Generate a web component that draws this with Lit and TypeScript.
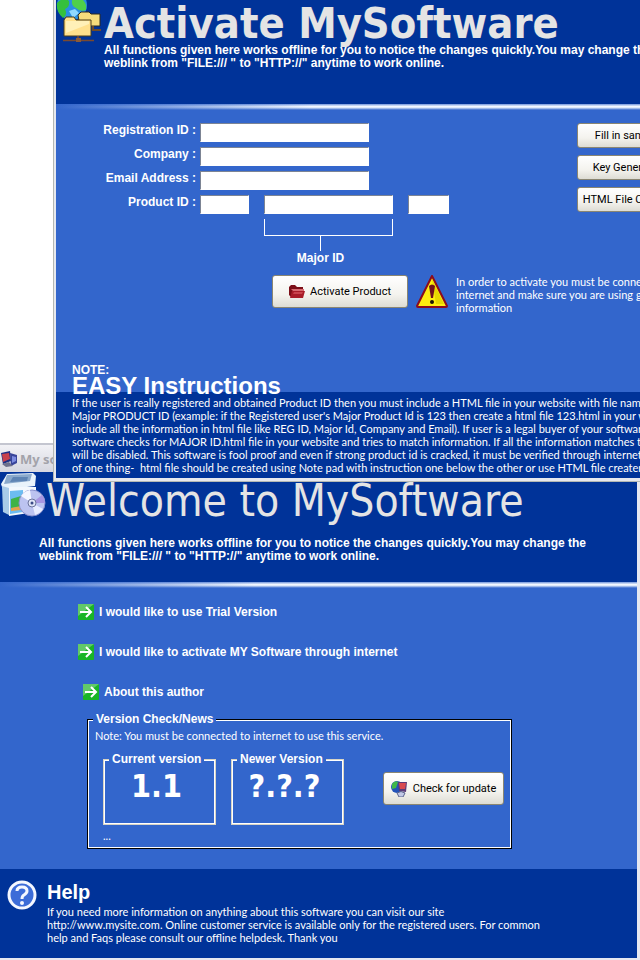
import { LitElement, html, css, svg } from "lit";
import { customElement, property } from "lit/decorators.js";

const networkIcon = svg`
  <svg class="icon" viewBox="0 0 45 44" width="45" height="44" aria-hidden="true">
    <circle cx="16" cy="5" r="15" fill="#2a8fe0"/>
    <path d="M1 3 Q8 -4 13 1 Q14 7 9 9 Q12 15 7 18 Q0 12 1 3Z" fill="#35c03c"/>
    <path d="M16 0 H27 Q31 4 30 10 Q24 12 20 8 Q15 6 16 0Z" fill="#4fd04a"/>
    <path d="M13 11 L19 9 L23 13 L17 18Z" fill="#8fd8ff"/>
    <path d="M22 15 L25 12 H33 L35 14 H44 V26 H24Z" fill="#f6dc7c" stroke="#2c2a20"/>
    <path d="M8 20 L10 17 H18 L20 20 H35 V36 H8Z" fill="#ffe08c" stroke="#4a3c18"/>
    <path d="M10 21 H33 V24 L10 33Z" fill="#fff0b8"/>
    <path d="M37 26 V30 M36 30 H45" stroke="#6d4b2a" stroke-width="2"/>
    <path d="M22 36 V41 M7 40.500 H38" stroke="#7a4a30" stroke-width="1.500"/>
    <rect x="20" y="38" width="5" height="4" fill="#8a5a38"/>
  </svg>`;

const setupIcon = svg`
  <svg class="icon" viewBox="0 0 45 46" width="45" height="46" aria-hidden="true">
    <path d="M0 12 L6 2 L32 1 L35 4 L34 14 L2 18Z" fill="#e9f3fb"/>
    <path d="M6 3 L31 2 L29 9 L3 12Z" fill="#8aa9cc"/>
    <path d="M12 5 H27 L26 9 L9 10Z" fill="#5e84b4"/>
    <path d="M1 14 L8 16 V43 L2 40Z" fill="#a9cbe8"/>
    <path d="M8 15 H35 V40 L8 44Z" fill="#f3f8fd"/>
    <path d="M9 19 L22 18 V40 L9 42Z" fill="#6cbcf0"/>
    <path d="M10 27 L20 24 V35 L10 36Z" fill="#3fb346"/>
    <path d="M10 36 L20 34 V38 L10 39Z" fill="#e5a24a"/>
    <circle cx="31" cy="31" r="13" fill="#bcc3f0" stroke="#8990cc"/>
    <path d="M31 31 L20 24 A13 13 0 0 1 29 18Z" fill="#f4f6ff"/>
    <path d="M31 31 L42 37 A13 13 0 0 1 34 43Z" fill="#e8ecff"/>
    <path d="M31 31 L41 23 A13 13 0 0 1 44 31Z" fill="#a795e0"/>
    <circle cx="31" cy="31" r="4" fill="#dfe3f6" stroke="#6b739c"/>
    <circle cx="31" cy="31" r="1.500" fill="#3a4a86"/>
  </svg>`;

const computerIcon = svg`
  <svg class="icon" viewBox="0 0 18 18" width="18" height="18" aria-hidden="true">
    <path d="M1 3 L10 1 L11 11 L3 14Z" fill="#1d2f86"/>
    <path d="M2 4 L9 3 L10 9 L3 12Z" fill="#c8404c"/>
    <path d="M10 3 L17 5 V13 L11 16Z" fill="#39459a"/>
    <path d="M12 6 L16 7 V11 L12 13Z" fill="#7d8be0"/>
    <path d="M2 14 L9 12 L13 16 L6 17Z" fill="#6c6f8c"/>
  </svg>`;

const folderIcon = svg`
  <svg class="icon" viewBox="0 0 16 14" width="16" height="14" aria-hidden="true">
    <path d="M0 2 L2 0 H6 L8 2 H14 V12 H2 L0 10Z" fill="#7c0f18"/>
    <path d="M2 4 H15 V6 H4Z" fill="#d86a70"/>
    <path d="M3 6 H16 L14 13 H1Z" fill="#a81c28"/>
    <path d="M5 7 H14 L13 9 H4Z" fill="#c9434d"/>
  </svg>`;

const warningIcon = svg`
  <svg class="icon" viewBox="0 0 32 33" width="32" height="33" role="img" aria-label="Warning">
    <path d="M16 1 L31 31 Q31 32 30 32 H2 Q1 32 1 31Z" fill="#ffee10" stroke="#8c0c1c" stroke-width="2" stroke-linejoin="round"/>
    <path d="M16 4 L28 29 H20Z" fill="#e8d800"/>
    <path d="M13 11 Q16 8 19 11 L17 23 H15Z" fill="#70101c"/>
    <circle cx="16" cy="27" r="2" fill="#1c1408"/>
  </svg>`;

const arrowIcon = svg`
  <svg class="icon" viewBox="0 0 16 16" width="16" height="16" aria-hidden="true">
    <rect width="16" height="16" rx="1" fill="#19b526"/>
    <path d="M0 0 H16 L0 12Z" fill="#62c968"/>
    <path d="M2 8 H13 M8 3 L13 8 L8 13" fill="none" stroke="#fff" stroke-width="2"/>
  </svg>`;

const updateIcon = svg`
  <svg class="icon" viewBox="0 0 16 16" width="16" height="16" aria-hidden="true">
    <circle cx="6" cy="6" r="6" fill="#2353b8"/>
    <path d="M1 3 Q4 -1 7 1 L5 7 L1 8Z" fill="#3fb84a"/>
    <path d="M7 1 H16 L15 11 L8 10Z" fill="#5a3a78"/>
    <path d="M8 2 H15 L14 8 L9 8Z" fill="#d84a50"/>
    <path d="M6 12 Q10 9 14 12 L12 16 H8Z" fill="#c2c9e6" stroke="#5a628c"/>
  </svg>`;

const helpIcon = svg`
  <svg class="icon" viewBox="0 0 30 32" width="30" height="32" aria-hidden="true">
    <circle cx="15" cy="16" r="13" fill="#3c6cd8" stroke="#f4f7ff" stroke-width="3"/>
    <path d="M10 12 Q10 8 15 8 Q20 8 20 12 Q20 14 17 16 Q15 17 15 20" fill="none" stroke="#f4f7ff" stroke-width="3"/>
    <circle cx="15" cy="24" r="2" fill="#f4f7ff"/>
  </svg>`;

const shared = css`
  :host {
    display: block;
    font: 11px/13px Lato, "Liberation Sans", Arial, sans-serif;
    color: #fff;
  }
  * { box-sizing: border-box; }
  h1, h2, h3, p, fieldset, legend { margin: 0; padding: 0; }
  p { white-space: nowrap; }
  .icon { display: block; flex: none; }
  h2, h3, label, .bold { font-family: "Liberation Sans", Arial, sans-serif; font-weight: bold; }
  .bold { font-size: 12px; }
  .display {
    font: 44px/46px "DejaVu Sans Condensed", "Noto Sans", sans-serif;
    color: #e4e4e4;
    white-space: nowrap;
  }
  .dark { background: #003399; }
  .rule {
    height: 6px;
    background:
      linear-gradient(to right, #3366cc, transparent 40%),
      linear-gradient(#6f93dc, #f4f9ff 40%, #dce8fb 60%, #3366cc);
  }
  .push {
    display: flex;
    flex: none;
    align-items: center;
    justify-content: center;
    border: 1px solid #8a8672;
    border-radius: 3px;
    padding: 0;
    background: linear-gradient(#fff, #f4f3ee 60%, #dddcd4);
    font: 11px/14px Roboto, "Liberation Sans", Arial, sans-serif;
    color: #000;
    white-space: nowrap;
  }
`;

@customElement("activate-window")
export class ActivateWindow extends LitElement {
  static styles = [shared, css`
    .frame {
      border: solid #e6e8ee;
      border-width: 0 0 3px 2px;
      outline: 1px solid #b4b8b4;
      background: #3366cc;
    }
    .header { display: flex; gap: 3px; height: 104px; }
    .display { font-size: 43px; font-weight: bold; line-height: 46px; }
    .header p { margin-top: -2px; }
    .body { display: flex; flex-direction: column; height: 282px; padding: 13px 0 0 44px; }
    .top { display: flex; justify-content: space-between; }
    .form { display: grid; grid-template-columns: 96px auto; column-gap: 4px; row-gap: 5px; }
    label { text-align: right; font-size: 12px; line-height: 15px; white-space: nowrap; }
    input {
      display: block;
      height: 19px;
      border: 1px solid #fff;
      border-top-color: #7c8494;
      border-left-color: #7c8494;
      padding: 0 2px;
      background: #fff;
      font: inherit;
      color: #000;
    }
    .wide { width: 169px; }
    .ids { display: flex; gap: 15px; }
    .prefix { width: 49px; }
    .major { width: 129px; }
    .suffix { width: 41px; }
    .bracket {
      grid-column: 2;
      width: 113px;
      margin-left: 64px;
      display: flex;
      flex-direction: column;
      align-items: center;
      line-height: 15px;
    }
    .brace { align-self: flex-start; width: 129px; height: 17px; border: solid #fff; border-width: 0 1px 1px; }
    .stem { width: 1px; height: 15px; background: #fff; }
    .side { display: flex; flex-direction: column; gap: 7px; margin-right: 17px; }
    .side .push { width: 100px; height: 25px; }
    .action { display: flex; gap: 8px; margin: 9px 0 0 172px; }
    .action .push { width: 136px; height: 33px; gap: 5px; }
    .notes { margin: auto 0 -4px -28px; }
    h2 { font-size: 24px; line-height: 20px; white-space: nowrap; }
    h3 { font-size: 12px; line-height: 12px; }
    .footer { padding: 4px 0 4px 16px; height: 86px; }
  `];

  render() {
    return html`
      <section class="frame">
        <header class="header dark">
          ${networkIcon}
          <div>
            <h1 class="display">Activate MySoftware</h1>
            <p class="bold">All functions given here works offline for you to notice the changes quickly.You may change the<br>weblink from "FILE:/// " to "HTTP://" anytime to work online.</p>
          </div>
        </header>
        <div class="rule"></div>
        <div class="body">
          <div class="top">
            <div class="form">
              <label for="reg">Registration ID :</label><input id="reg" class="wide" type="text">
              <label for="company">Company :</label><input id="company" class="wide" type="text">
              <label for="email">Email Address :</label><input id="email" class="wide" type="text">
              <label for="product">Product ID :</label>
              <div class="ids">
                <input id="product" class="prefix" type="text">
                <input class="major" type="text" aria-labelledby="major">
                <input class="suffix" type="text" aria-label="Product ID, last part">
              </div>
              <div class="bracket">
                <div class="brace"></div>
                <div class="stem"></div>
                <span id="major" class="bold">Major ID</span>
              </div>
            </div>
            <div class="side">
              <button class="push">Fill in sample</button>
              <button class="push">Key Generator</button>
              <button class="push">HTML File Creater</button>
            </div>
          </div>
          <div class="action">
            <button class="push">${folderIcon} Activate Product</button>
            ${warningIcon}
            <p>In order to activate you must be connected to the<br>internet and make sure you are using genuine<br>information</p>
          </div>
          <div class="notes">
            <h3>NOTE:</h3>
            <h2>EASY Instructions</h2>
          </div>
        </div>
        <footer class="footer dark">
          <p>If the user is really registered and obtained Product ID then you must include a HTML file in your website with file name of<br>Major PRODUCT ID (example: if the Registered user's Major Product Id is 123 then create a html file 123.html in your website and<br>include all the information in html file like REG ID, Major Id, Company and Email). If user is a legal buyer of your software then<br>software checks for MAJOR ID.html file in your website and tries to match information. If all the information matches then the<br>will be disabled. This software is fool proof and even if strong product id is cracked, it must be verified through internet. Make<br>of one thing-&nbsp; html file should be created using Note pad with instruction one below the other or use HTML file creater</p>
        </footer>
      </section>`;
  }
}

@customElement("version-box")
export class VersionBox extends LitElement {
  @property() name = "";
  @property() version = "";

  static styles = [shared, css`
    fieldset {
      width: 113px;
      height: 73px;
      min-width: 0;
      border: 1px solid #d8d4c4;
      box-shadow: inset 0 0 0 1px #fff;
    }
    legend { margin-left: 5px; padding: 0 3px; background: #3366cc; line-height: 14px; white-space: nowrap; }
    .number {
      display: block;
      padding-right: 6px;
      font: bold 32px/40px "DejaVu Sans Condensed", sans-serif;
      text-align: center;
    }
  `];

  render() {
    return html`
      <fieldset>
        <legend class="bold">${this.name}</legend>
        <output class="number">${this.version}</output>
      </fieldset>`;
  }
}

@customElement("welcome-window")
export class WelcomeWindow extends LitElement {
  static styles = [shared, css`
    .frame {
      border: solid #e6e8f0;
      border-width: 0 3px 3px 0;
      background: #3366cc;
    }
    .title {
      display: flex;
      align-items: center;
      gap: 2px;
      height: 29px;
      border-top: 2px solid #c4c6d0;
      background: linear-gradient(#f2f2f6, #d6d7e0);
      font: bold 13px/16px "Noto Sans", sans-serif;
      color: #a3a3aa;
      white-space: nowrap;
    }
    .header { height: 110px; }
    .banner { display: flex; align-items: flex-start; padding-left: 1px; height: 65px; }
    .banner .display { padding-top: 6px; }
    .header p { padding-left: 39px; }
    .body { height: 281px; padding: 16px 0 0 78px; }
    .options { display: flex; flex-direction: column; align-items: flex-start; gap: 24px; }
    a { display: flex; align-items: center; gap: 5px; height: 16px; color: #fff; text-decoration: none; white-space: nowrap; }
    .about { margin-left: 5px; }
    .news {
      width: 425px;
      max-width: 100%;
      height: 137px;
      min-width: 0;
      margin: 12px 0 0 9px;
      border: 1px solid #000;
      box-shadow: inset 0 0 0 1px #fff;
    }
    .news > legend { margin-left: 5px; padding: 0 3px; background: #3366cc; line-height: 14px; }
    .hint { padding: 3px 0 0 7px; }
    .versions { display: flex; align-items: center; gap: 15px; margin: 10px 0 0 15px; }
    .versions .push { width: 121px; height: 33px; margin-left: 24px; gap: 6px; }
    .status { padding: 4px 0 0 15px; }
    .footer { display: flex; gap: 10px; height: 89px; padding: 10px 0 0 7px; }
    h2 { font-size: 20px; line-height: 26px; }
  `];

  render() {
    return html`
      <div class="title">${computerIcon} My software</div>
      <section class="frame">
        <header class="header dark">
          <div class="banner">
            ${setupIcon}
            <h1 class="display">Welcome to MySoftware</h1>
          </div>
          <p class="bold">All functions given here works offline for you to notice the changes quickly.You may change the<br>weblink from "FILE:/// " to "HTTP://" anytime to work online.</p>
        </header>
        <div class="rule"></div>
        <div class="body">
          <nav class="options">
            <a href="#trial" class="bold">${arrowIcon} I would like to use Trial Version</a>
            <a href="#activate" class="bold">${arrowIcon} I would like to activate MY Software through internet</a>
            <a href="#about" class="bold about">${arrowIcon} About this author</a>
          </nav>
          <fieldset class="news">
            <legend class="bold">Version Check/News</legend>
            <p class="hint">Note: You must be connected to internet to use this service.</p>
            <div class="versions">
              <version-box name="Current version" version="1.1"></version-box>
              <version-box name="Newer Version" version="?.?.?"></version-box>
              <button class="push">${updateIcon} Check for update</button>
            </div>
            <p class="status">...</p>
          </fieldset>
        </div>
        <footer class="footer dark">
          ${helpIcon}
          <div>
            <h2>Help</h2>
            <p>If you need more information on anything about this software you can visit our site<br>http://www.mysite.com. Online customer service is available only for the registered users. For common<br>help and Faqs please consult our offline helpdesk. Thank you</p>
          </div>
        </footer>
      </section>`;
  }
}

@customElement("app-root")
export class AppRoot extends LitElement {
  static styles = css`
    :host { display: block; min-height: 100vh; overflow: hidden; background: #fff; }
    .front { position: relative; z-index: 1; margin: 0 -54px 0 54px; }
    .back { margin-top: -38px; }
  `;

  render() {
    return html`
      <activate-window class="front"></activate-window>
      <welcome-window class="back"></welcome-window>`;
  }
}
